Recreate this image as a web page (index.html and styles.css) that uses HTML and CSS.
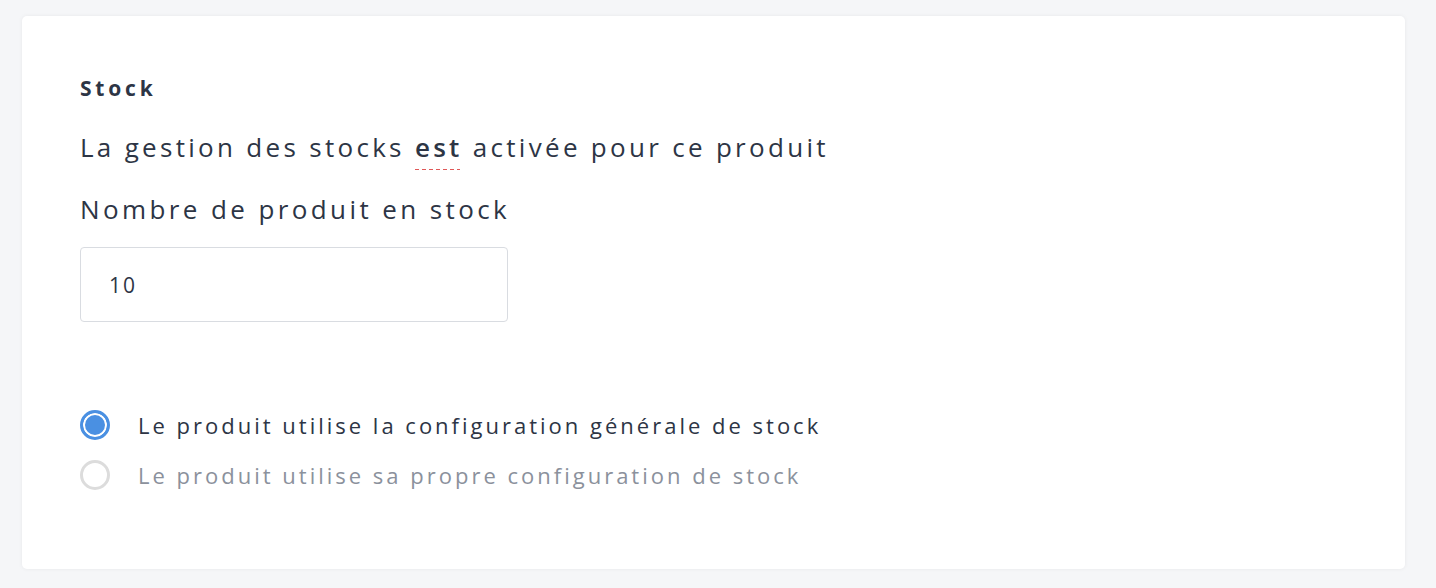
FILE: index.html
```html
<!DOCTYPE html>
<html lang="fr">
<head>
    <meta charset="UTF-8">
    <meta name="viewport" content="width=device-width, initial-scale=1.0">
    <title>Stock</title>
    <link rel="stylesheet" href="styles.css">
</head>
<body>
    <main class="card">
        <h3 class="section-title">Stock</h3>
        <p class="status">La gestion des stocks <strong class="flagged">est</strong> activée pour ce produit</p>

        <label class="field-label" for="stockQty">Nombre de produit en stock</label>
        <input class="field-input" type="text" id="stockQty" value="10">

        <!-- Stock configuration -->
        <div class="radio-group">
            <label class="radio">
                <span class="radio-dot checked"></span>
                <span class="radio-text">Le produit utilise la configuration générale de stock</span>
            </label>
            <label class="radio muted">
                <span class="radio-dot"></span>
                <span class="radio-text">Le produit utilise sa propre configuration de stock</span>
            </label>
        </div>
    </main>
</body>
</html>
```

FILE: styles.css
```css
body {
    font-family: "Open Sans", Arial, sans-serif;
    background-color: #f5f6f8;
    color: #2d3545;
    margin: 0;
    padding: 16px 31px 19px 22px;
}

.card {
    background-color: #ffffff;
    border-radius: 5px;
    box-shadow: 0 0 4px rgba(0, 0, 0, 0.06);
    height: 553px;
    box-sizing: border-box;
    padding: 59px 58px 0;
}

.section-title {
    font-size: 21px;
    font-weight: 700;
    letter-spacing: 3.8px;
    margin: 0;
    line-height: 26px;
}

.status {
    font-size: 26px;
    letter-spacing: 3.3px;
    margin: 29px 0 0;
    line-height: 34px;
}

.flagged {
    font-weight: 600;
    padding-bottom: 5px;
    background-image: repeating-linear-gradient(to right, #e05858 0 4px, transparent 4px 7px);
    background-repeat: no-repeat;
    background-position: left bottom;
    background-size: calc(100% - 3px) 1px;
}

.field-label {
    display: block;
    font-size: 26px;
    letter-spacing: 3.4px;
    margin-top: 28px;
    line-height: 34px;
}

.field-input {
    display: block;
    width: 428px;
    height: 75px;
    box-sizing: border-box;
    margin-top: 21px;
    padding: 0 28px;
    border: 1px solid #d9dce1;
    border-radius: 4px;
    font-family: inherit;
    font-size: 21px;
    letter-spacing: 2px;
    color: #2d3545;
}

.radio-group {
    margin-top: 88px;
    display: flex;
    flex-direction: column;
    gap: 20px;
}

.radio {
    display: flex;
    align-items: center;
    gap: 28px;
    font-size: 22px;
    letter-spacing: 3px;
    line-height: 30px;
}

.radio.muted {
    color: #8b919c;
}

.radio-dot {
    flex: none;
    width: 30px;
    height: 30px;
    box-sizing: border-box;
    border-radius: 50%;
    border: 3px solid #dcdcdc;
    background-color: #ffffff;
}

.radio-dot.checked {
    border-color: #4a90e2;
    background-color: #4a90e2;
    box-shadow: inset 0 0 0 2px #ffffff;
}
```
